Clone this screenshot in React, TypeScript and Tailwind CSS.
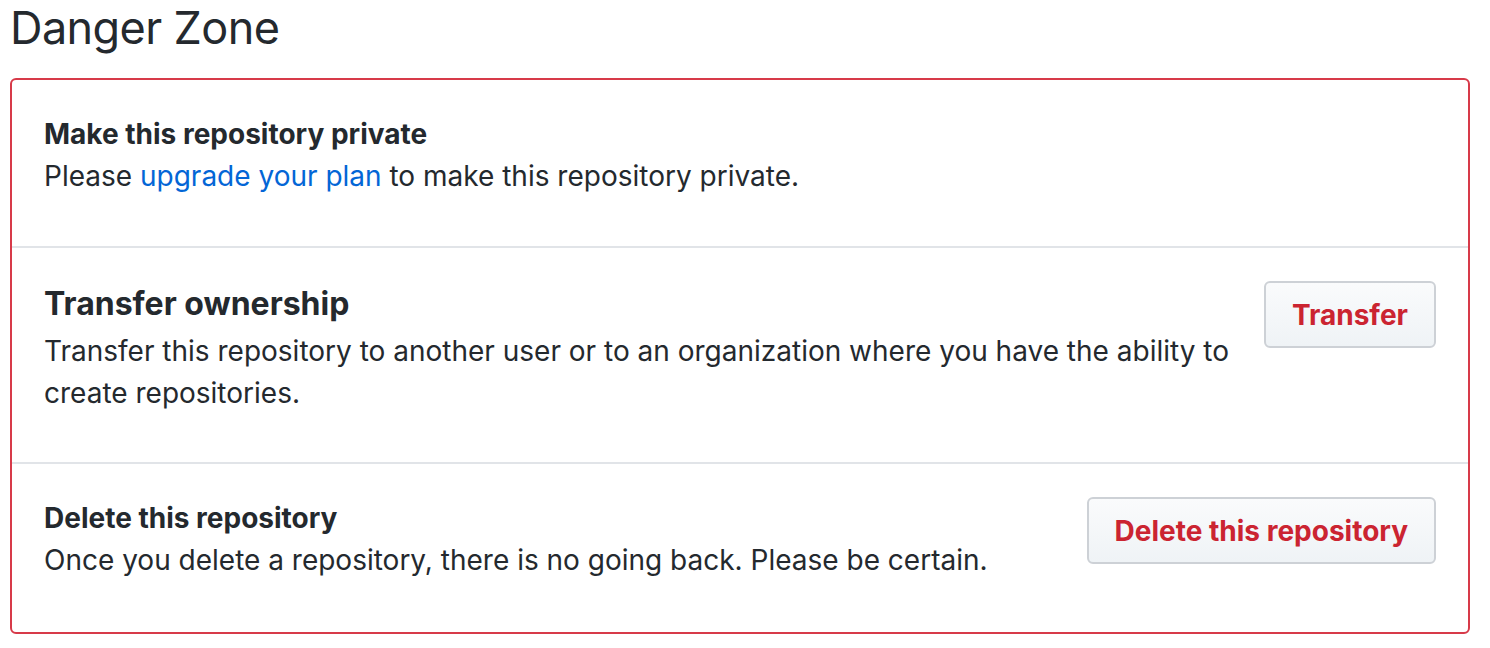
import React from "react";

function DangerButton({ children }: { children: React.ReactNode }) {
  return (
    <button
      type="button"
      className="h-[67px] px-[26px] rounded-[6px] border-2 border-[#cdd1d6] bg-gradient-to-b from-[#fafbfc] to-[#eff3f6] text-[#cb2431] text-[28px] font-bold leading-none whitespace-nowrap"
    >
      {children}
    </button>
  );
}

export default function App() {
  return (
    <div
      className="w-[1490px] h-[648px] bg-white text-[#24292e] pl-[10px] pr-[20px]"
      style={{ fontFamily: 'Inter, "Noto Sans", "Liberation Sans", sans-serif' }}
    >
      <h2 className="text-[45px] font-normal leading-[56px] h-[78px] tracking-[-0.6px]">
        Danger Zone
      </h2>
      <div className="border-2 border-[#d73a49] rounded-[6px]">
        <div className="pl-[32px] pr-[32px] pt-[33px] h-[168px] border-b-2 border-[#e1e4e8]">
          <div className="text-[28px] font-bold leading-[42px]">
            Make this repository private
          </div>
          <div className="text-[28px] leading-[42px]">
            Please <span className="text-[#0366d6]">upgrade your plan</span> to make this
            repository private.
          </div>
        </div>
        <div className="pl-[32px] pr-[32px] pt-[32px] h-[216px] border-b-2 border-[#e1e4e8] flex items-start justify-between gap-[32px]">
          <div className="w-[1200px]">
            <div className="text-[32px] font-bold leading-[48px] mb-[2px]">
              Transfer ownership
            </div>
            <div className="text-[28px] leading-[42px]">
              Transfer this repository to another user or to an organization where you have the ability to
              create repositories.
            </div>
          </div>
          <div className="pt-[1px]">
            <DangerButton>Transfer</DangerButton>
          </div>
        </div>
        <div className="pl-[32px] pr-[32px] pt-[33px] h-[168px] flex items-start justify-between">
          <div>
            <div className="text-[28px] font-bold leading-[42px]">
              Delete this repository
            </div>
            <div className="text-[28px] leading-[42px]">
              Once you delete a repository, there is no going back. Please be certain.
            </div>
          </div>
          <div>
            <DangerButton>Delete this repository</DangerButton>
          </div>
        </div>
      </div>
    </div>
  );
}
